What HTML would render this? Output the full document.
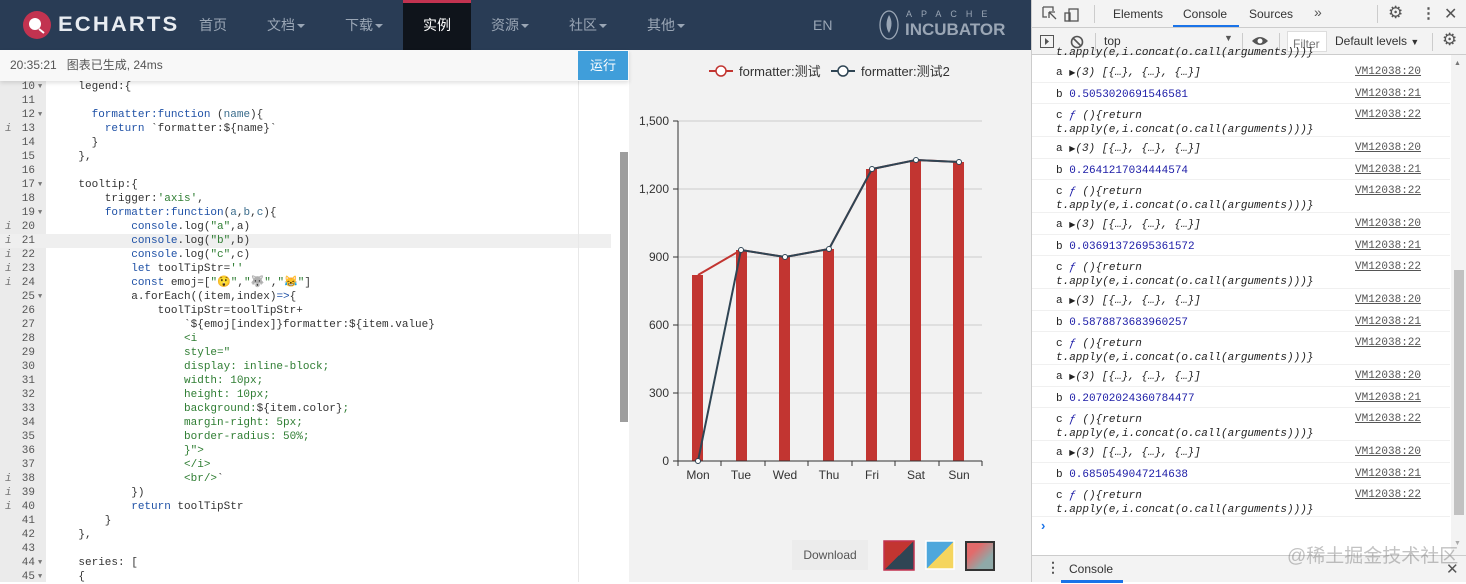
<!DOCTYPE html>
<html><head><meta charset="utf-8"><style>
*{margin:0;padding:0;box-sizing:border-box}
body{width:1466px;height:582px;overflow:hidden;background:#fff;font-family:"Liberation Sans","Noto Sans CJK SC",sans-serif;position:relative}
.hdr{position:absolute;left:0;top:0;width:1031px;height:50px;background:#293c55}
.nav{position:absolute;top:0;height:50px;line-height:50px;color:#9aa6b5;font-size:14px}
.car::after{content:"";display:inline-block;border-left:4px solid transparent;border-right:4px solid transparent;border-top:4px solid #9aa6b5;vertical-align:middle;margin-left:2px}
.status{position:absolute;left:0;top:50px;width:629px;height:31px;background:#f8f8f8;box-shadow:0 2px 4px rgba(0,0,0,.12);z-index:2;font-size:12px;color:#555;line-height:31px;padding-left:10px}
.run{position:absolute;left:578px;top:51px;width:50px;height:29px;background:#409eda;color:#fff;font-size:13px;line-height:29px;text-align:center;z-index:3}
.gut{position:absolute;left:0;top:81px;width:46px;height:501px;background:#ebebeb}
.code{position:absolute;left:0;top:80px;width:620px;font-family:"Liberation Mono","Noto Sans CJK SC",monospace;font-size:11px;line-height:14px;color:#333}
.ln{position:relative;height:14px;white-space:pre}
.n{position:absolute;left:0;width:35px;text-align:right;color:#555}
.i{position:absolute;left:5px;color:#777;font-style:italic}
.f{position:absolute;left:38px;color:#777;font-size:7px}
.t{position:absolute;left:52px}
.k{color:#1f51a6}.s{color:#2e7d32}.v{color:#3a6c8c}
.chart{position:absolute;left:629px;top:50px;width:402px;height:532px;background:#f2f2f2}
.dev{position:absolute;left:1031px;top:0;width:435px;height:582px;background:#fff;border-left:1px solid #ccc;font-size:12px;color:#333}
.tb{position:absolute;left:0;width:435px;background:#f3f3f3;border-bottom:1px solid #ccc}
.row{position:absolute;left:0;width:418px;border-bottom:1px solid #f0f0f0;font-family:"Liberation Mono",monospace;font-size:11px;color:#222}
.row .l{position:absolute;left:24px;top:5px;white-space:pre;line-height:14px}
.row .r{position:absolute;left:323px;top:5px;text-decoration:underline;color:#555}
.it{font-style:italic}.bl{color:#1a1aa6}
</style></head><body>
<div class="hdr">
  <svg style="position:absolute;left:22px;top:10px" width="30" height="30"><circle cx="15" cy="15" r="14" fill="#c23350"/><circle cx="13" cy="14" r="6" fill="#fff"/><path d="M17 19 l5 4" stroke="#fff" stroke-width="2"/></svg>
  <div class="nav" style="left:58px;color:#e8ecf1;font-size:21px;font-weight:bold;letter-spacing:2px;transform:scaleX(1.05);transform-origin:left">ECHARTS</div>
  <div class="nav" style="left:199px">首页</div>
  <div class="nav car" style="left:267px">文档</div>
  <div class="nav car" style="left:345px">下载</div>
  <div style="position:absolute;left:403px;top:0;width:68px;height:50px;background:#0f141b;border-top:3px solid #c23350"></div>
  <div class="nav" style="left:423px;color:#fff">实例</div>
  <div class="nav car" style="left:491px">资源</div>
  <div class="nav car" style="left:569px">社区</div>
  <div class="nav car" style="left:647px">其他</div>
  <div class="nav" style="left:813px">EN</div>
  <svg style="position:absolute;left:878px;top:9px" width="22" height="32"><ellipse cx="11" cy="16" rx="9" ry="14" fill="none" stroke="#9aa6b5" stroke-width="1.3"/><path d="M11 6 q5 8 0 18 q-5-8 0-18" fill="#9aa6b5"/></svg>
  <div style="position:absolute;left:906px;top:9px;color:#9aa6b5;font-size:9px;letter-spacing:9px">APACHE</div>
  <div style="position:absolute;left:905px;top:20px;color:#9aa6b5;font-size:17px;font-weight:bold">INCUBATOR</div>
</div>
<div class="status">20:35:21&nbsp;&nbsp;&nbsp;图表已生成, 24ms</div>
<div class="run">运行</div>
<div class="gut"></div>
<div style="position:absolute;left:0;top:234px;width:611px;height:14px;background:#efefef"></div>
<div style="position:absolute;left:578px;top:81px;width:1px;height:501px;background:#e8e8e8"></div>
<div style="position:absolute;left:620px;top:152px;width:8px;height:270px;background:#9e9e9e"></div>
<div class="code">
<div class="ln"><span class="n">10</span><span class="f">▼</span><span class="t">    legend:{</span></div>
<div class="ln"><span class="n">11</span><span class="t"></span></div>
<div class="ln"><span class="n">12</span><span class="f">▼</span><span class="t">      <span class="k">formatter:function</span> (<span class="v">name</span>){</span></div>
<div class="ln"><span class="i">i</span><span class="n">13</span><span class="t">        <span class="k">return</span> `formatter:${name}`</span></div>
<div class="ln"><span class="n">14</span><span class="t">      }</span></div>
<div class="ln"><span class="n">15</span><span class="t">    },</span></div>
<div class="ln"><span class="n">16</span><span class="t"></span></div>
<div class="ln"><span class="n">17</span><span class="f">▼</span><span class="t">    tooltip:{</span></div>
<div class="ln"><span class="n">18</span><span class="t">        trigger:<span class="s">'axis'</span>,</span></div>
<div class="ln"><span class="n">19</span><span class="f">▼</span><span class="t">        <span class="k">formatter:function</span>(<span class="v">a</span>,<span class="v">b</span>,<span class="v">c</span>){</span></div>
<div class="ln"><span class="i">i</span><span class="n">20</span><span class="t">            <span class="k">console</span>.log(<span class="s">"a"</span>,a)</span></div>
<div class="ln"><span class="i">i</span><span class="n">21</span><span class="t">            <span class="k">console</span>.log(<span class="s">"b"</span>,b)</span></div>
<div class="ln"><span class="i">i</span><span class="n">22</span><span class="t">            <span class="k">console</span>.log(<span class="s">"c"</span>,c)</span></div>
<div class="ln"><span class="i">i</span><span class="n">23</span><span class="t">            <span class="k">let</span> toolTipStr=<span class="s">''</span></span></div>
<div class="ln"><span class="i">i</span><span class="n">24</span><span class="t">            <span class="k">const</span> emoj=[<span class="s">"😲"</span>,<span class="s">"🐺"</span>,<span class="s">"😹"</span>]</span></div>
<div class="ln"><span class="n">25</span><span class="f">▼</span><span class="t">            a.forEach((item,index)<span class="k">=&gt;</span>{</span></div>
<div class="ln"><span class="n">26</span><span class="t">                toolTipStr=toolTipStr+</span></div>
<div class="ln"><span class="n">27</span><span class="t">                    `${emoj[index]}formatter:${item.value}</span></div>
<div class="ln"><span class="n">28</span><span class="t"><span class="s">                    &lt;i</span></span></div>
<div class="ln"><span class="n">29</span><span class="t"><span class="s">                    style="</span></span></div>
<div class="ln"><span class="n">30</span><span class="t"><span class="s">                    display: inline-block;</span></span></div>
<div class="ln"><span class="n">31</span><span class="t"><span class="s">                    width: 10px;</span></span></div>
<div class="ln"><span class="n">32</span><span class="t"><span class="s">                    height: 10px;</span></span></div>
<div class="ln"><span class="n">33</span><span class="t"><span class="s">                    background:</span>${item.color}<span class="s">;</span></span></div>
<div class="ln"><span class="n">34</span><span class="t"><span class="s">                    margin-right: 5px;</span></span></div>
<div class="ln"><span class="n">35</span><span class="t"><span class="s">                    border-radius: 50%;</span></span></div>
<div class="ln"><span class="n">36</span><span class="t"><span class="s">                    }"&gt;</span></span></div>
<div class="ln"><span class="n">37</span><span class="t"><span class="s">                    &lt;/i&gt;</span></span></div>
<div class="ln"><span class="i">i</span><span class="n">38</span><span class="t"><span class="s">                    &lt;br/&gt;</span>`</span></div>
<div class="ln"><span class="i">i</span><span class="n">39</span><span class="t">            })</span></div>
<div class="ln"><span class="i">i</span><span class="n">40</span><span class="t">            <span class="k">return</span> toolTipStr</span></div>
<div class="ln"><span class="n">41</span><span class="t">        }</span></div>
<div class="ln"><span class="n">42</span><span class="t">    },</span></div>
<div class="ln"><span class="n">43</span><span class="t"></span></div>
<div class="ln"><span class="n">44</span><span class="f">▼</span><span class="t">    series: [</span></div>
<div class="ln"><span class="n">45</span><span class="f">▼</span><span class="t">    {</span></div>
</div>
<div class="chart">
<svg width="402" height="532" style="position:absolute;left:0;top:0;font-family:'Liberation Sans','Noto Sans CJK SC',sans-serif">
<g transform="translate(-629,-50)">
<line x1="709" y1="71" x2="733" y2="71" stroke="#c23531" stroke-width="2"/><circle cx="721" cy="71" r="5" fill="#fff" stroke="#c23531" stroke-width="1.5"/>
<text x="739" y="76" font-size="13" fill="#333">formatter:测试</text>
<line x1="831" y1="71" x2="855" y2="71" stroke="#2f4554" stroke-width="2"/><circle cx="843" cy="71" r="5" fill="#fff" stroke="#2f4554" stroke-width="1.5"/>
<text x="861" y="76" font-size="13" fill="#333">formatter:测试2</text>
<g stroke="#ccc"><line x1="678" y1="121" x2="982" y2="121"/><line x1="678" y1="189" x2="982" y2="189"/><line x1="678" y1="257" x2="982" y2="257"/><line x1="678" y1="325" x2="982" y2="325"/><line x1="678" y1="393" x2="982" y2="393"/></g>
<g font-size="12" fill="#333" text-anchor="end"><text x="669" y="125">1,500</text><text x="669" y="193">1,200</text><text x="669" y="261">900</text><text x="669" y="329">600</text><text x="669" y="397">300</text><text x="669" y="465">0</text></g>
<line x1="678" y1="121" x2="678" y2="461" stroke="#333"/>
<g stroke="#333"><line x1="673" y1="121" x2="678" y2="121"/><line x1="673" y1="189" x2="678" y2="189"/><line x1="673" y1="257" x2="678" y2="257"/><line x1="673" y1="325" x2="678" y2="325"/><line x1="673" y1="393" x2="678" y2="393"/><line x1="673" y1="461" x2="678" y2="461"/></g>
<g fill="#c23531"><rect x="692" y="275" width="11" height="186"/><rect x="736" y="250" width="11" height="211"/><rect x="779" y="257" width="11" height="204"/><rect x="823" y="249" width="11" height="212"/><rect x="866" y="169" width="11" height="292"/><rect x="910" y="160" width="11" height="301"/><rect x="953" y="162" width="11" height="299"/></g>
<line x1="678" y1="461" x2="982" y2="461" stroke="#333"/>
<g stroke="#333"><line x1="678" y1="461" x2="678" y2="466"/><line x1="721" y1="461" x2="721" y2="466"/><line x1="765" y1="461" x2="765" y2="466"/><line x1="808" y1="461" x2="808" y2="466"/><line x1="852" y1="461" x2="852" y2="466"/><line x1="895" y1="461" x2="895" y2="466"/><line x1="939" y1="461" x2="939" y2="466"/><line x1="982" y1="461" x2="982" y2="466"/></g>
<g font-size="12" fill="#333" text-anchor="middle"><text x="698" y="479">Mon</text><text x="741" y="479">Tue</text><text x="785" y="479">Wed</text><text x="829" y="479">Thu</text><text x="872" y="479">Fri</text><text x="916" y="479">Sat</text><text x="959" y="479">Sun</text></g>
<polyline points="698,275 741,250 785,257 829,249 872,169 916,160 959,162" fill="none" stroke="#c23531" stroke-width="2"/>
<polyline points="698,461 741,250 785,257 829,249 872,169 916,160 959,162" fill="none" stroke="#2f4554" stroke-width="2"/>
<g fill="#fff" stroke="#2f4554"><circle cx="698" cy="461" r="2.5"/><circle cx="741" cy="250" r="2.5"/><circle cx="785" cy="257" r="2.5"/><circle cx="829" cy="249" r="2.5"/><circle cx="872" cy="169" r="2.5"/><circle cx="916" cy="160" r="2.5"/><circle cx="959" cy="162" r="2.5"/></g>
<rect x="792" y="540" width="76" height="30" fill="#ececec"/><text x="830" y="559" font-size="12" fill="#555" text-anchor="middle">Download</text>
<defs><linearGradient id="g1" x1="0" y1="0" x2="1" y2="1"><stop offset=".5" stop-color="#c23531"/><stop offset=".5" stop-color="#2f4554"/></linearGradient>
<linearGradient id="g2" x1="0" y1="0" x2="1" y2="1"><stop offset=".5" stop-color="#4ea7dc"/><stop offset=".5" stop-color="#f5d55e"/></linearGradient>
<linearGradient id="g3" x1="0" y1="0" x2="1" y2="1"><stop offset=".3" stop-color="#e26b6b"/><stop offset=".7" stop-color="#8fa9a8"/></linearGradient></defs>
<rect x="884" y="541" width="30" height="29" fill="url(#g1)" stroke="#c23350" stroke-width="1.5"/>
<rect x="926" y="541" width="28" height="28" fill="url(#g2)" stroke="#fff" stroke-width="1.5"/>
<rect x="966" y="542" width="28" height="28" fill="url(#g3)" stroke="#333" stroke-width="2"/>
</g></svg>
</div>
<div class="dev">
  <div class="tb" style="top:0;height:28px">
    <svg style="position:absolute;left:10px;top:6px" width="40" height="16"><path d="M1 1h10v4M1 1v10h4M7 6l7 7M7 6v6M7 6h6" fill="none" stroke="#555" stroke-width="1.3"/><rect x="27" y="3" width="9" height="12" fill="none" stroke="#555" stroke-width="1.3"/><rect x="23" y="7" width="5" height="8" fill="none" stroke="#555" stroke-width="1.3"/></svg>
    <div style="position:absolute;left:62px;top:5px;width:1px;height:18px;background:#ccc"></div>
    <div style="position:absolute;left:81px;top:7px;color:#333">Elements</div>
    <div style="position:absolute;left:151px;top:7px;color:#333">Console</div>
    <div style="position:absolute;left:141px;top:25px;width:66px;height:2px;background:#1a73e8"></div>
    <div style="position:absolute;left:217px;top:7px;color:#333">Sources</div>
    <div style="position:absolute;left:282px;top:4px;color:#555;font-size:14px">»</div>
    <div style="position:absolute;left:345px;top:5px;width:1px;height:18px;background:#ccc"></div>
    <div style="position:absolute;left:356px;top:3px;color:#555;font-size:17px">⚙</div>
    <div style="position:absolute;left:389px;top:4px;color:#555;font-size:15px;font-weight:bold">⋮</div>
    <div style="position:absolute;left:412px;top:4px;color:#555;font-size:16px">✕</div>
  </div>
  <div class="tb" style="top:28px;height:27px">
    <svg style="position:absolute;left:8px;top:6px" width="50" height="16"><rect x="0.5" y="1.5" width="13" height="12" fill="none" stroke="#555"/><path d="M5 4l4 3.5-4 3.5z" fill="#555"/><circle cx="37" cy="8" r="5.5" fill="none" stroke="#555" stroke-width="1.6"/><path d="M33 4l8 8" stroke="#555" stroke-width="1.6"/></svg>
    <div style="position:absolute;left:63px;top:5px;width:1px;height:18px;background:#ccc"></div>
    <div style="position:absolute;left:72px;top:6px">top</div>
    <div style="position:absolute;left:192px;top:5px;font-size:9px;color:#555">▼</div>
    <div style="position:absolute;left:210px;top:5px;width:1px;height:18px;background:#ccc"></div>
    <svg style="position:absolute;left:219px;top:7px" width="18" height="12"><path d="M1 6q8-8 16 0q-8 8-16 0z" fill="#555"/><circle cx="9" cy="6" r="2.5" fill="#fff"/></svg>
    <div style="position:absolute;left:247px;top:5px;width:1px;height:18px;background:#ccc"></div>
    <div style="position:absolute;left:255px;top:3px;width:40px;height:21px;background:#fff;border:1px solid #ddd;color:#777;padding:5px 0 0 5px">Filter</div>
    <div style="position:absolute;left:303px;top:6px">Default levels <span style="font-size:9px">▼</span></div>
    <div style="position:absolute;left:400px;top:5px;width:1px;height:18px;background:#ccc"></div>
    <div style="position:absolute;left:410px;top:2px;color:#555;font-size:17px">⚙</div>
  </div>
  <div style="position:absolute;left:24px;top:47px;font-family:'Liberation Mono',monospace;font-size:11px;font-style:italic;color:#222">t.apply(e,i.concat(o.call(arguments)))}</div>
  <div class="row" style="top:61px;height:22px"><div class="l">a <span style="font-size:8px">▶</span><span class="it">(3) [{…}, {…}, {…}]</span></div><div class="r">VM12038:20</div></div>
  <div class="row" style="top:83px;height:21px"><div class="l">b <span class="bl">0.5053020691546581</span></div><div class="r">VM12038:21</div></div>
  <div class="row" style="top:104px;height:33px"><div class="l">c <span class="bl it">ƒ</span> <span class="it">(){return
t.apply(e,i.concat(o.call(arguments)))}</span></div><div class="r">VM12038:22</div></div>
  <div class="row" style="top:137px;height:22px"><div class="l">a <span style="font-size:8px">▶</span><span class="it">(3) [{…}, {…}, {…}]</span></div><div class="r">VM12038:20</div></div>
  <div class="row" style="top:159px;height:21px"><div class="l">b <span class="bl">0.2641217034444574</span></div><div class="r">VM12038:21</div></div>
  <div class="row" style="top:180px;height:33px"><div class="l">c <span class="bl it">ƒ</span> <span class="it">(){return
t.apply(e,i.concat(o.call(arguments)))}</span></div><div class="r">VM12038:22</div></div>
  <div class="row" style="top:213px;height:22px"><div class="l">a <span style="font-size:8px">▶</span><span class="it">(3) [{…}, {…}, {…}]</span></div><div class="r">VM12038:20</div></div>
  <div class="row" style="top:235px;height:21px"><div class="l">b <span class="bl">0.03691372695361572</span></div><div class="r">VM12038:21</div></div>
  <div class="row" style="top:256px;height:33px"><div class="l">c <span class="bl it">ƒ</span> <span class="it">(){return
t.apply(e,i.concat(o.call(arguments)))}</span></div><div class="r">VM12038:22</div></div>
  <div class="row" style="top:289px;height:22px"><div class="l">a <span style="font-size:8px">▶</span><span class="it">(3) [{…}, {…}, {…}]</span></div><div class="r">VM12038:20</div></div>
  <div class="row" style="top:311px;height:21px"><div class="l">b <span class="bl">0.5878873683960257</span></div><div class="r">VM12038:21</div></div>
  <div class="row" style="top:332px;height:33px"><div class="l">c <span class="bl it">ƒ</span> <span class="it">(){return
t.apply(e,i.concat(o.call(arguments)))}</span></div><div class="r">VM12038:22</div></div>
  <div class="row" style="top:365px;height:22px"><div class="l">a <span style="font-size:8px">▶</span><span class="it">(3) [{…}, {…}, {…}]</span></div><div class="r">VM12038:20</div></div>
  <div class="row" style="top:387px;height:21px"><div class="l">b <span class="bl">0.20702024360784477</span></div><div class="r">VM12038:21</div></div>
  <div class="row" style="top:408px;height:33px"><div class="l">c <span class="bl it">ƒ</span> <span class="it">(){return
t.apply(e,i.concat(o.call(arguments)))}</span></div><div class="r">VM12038:22</div></div>
  <div class="row" style="top:441px;height:22px"><div class="l">a <span style="font-size:8px">▶</span><span class="it">(3) [{…}, {…}, {…}]</span></div><div class="r">VM12038:20</div></div>
  <div class="row" style="top:463px;height:21px"><div class="l">b <span class="bl">0.6850549047214638</span></div><div class="r">VM12038:21</div></div>
  <div class="row" style="top:484px;height:33px"><div class="l">c <span class="bl it">ƒ</span> <span class="it">(){return
t.apply(e,i.concat(o.call(arguments)))}</span></div><div class="r">VM12038:22</div></div>
  <div style="position:absolute;left:9px;top:518px;color:#1a73e8;font-size:13px;font-weight:bold">›</div>
  <div style="position:absolute;left:419px;top:55px;width:16px;height:500px;background:#f3f3f3"></div>
  <div style="position:absolute;left:422px;top:270px;width:10px;height:245px;background:#c1c1c1"></div>
  <div style="position:absolute;left:422px;top:60px;font-size:7px;color:#777">▲</div>
  <div style="position:absolute;left:422px;top:540px;font-size:7px;color:#aaa">▼</div>
  <div style="position:absolute;left:255px;top:541px;font-size:19px;color:rgba(120,120,120,.45);z-index:5">@稀土掘金技术社区</div>
  <div class="tb" style="top:555px;height:27px;border-top:1px solid #ccc;border-bottom:none">
    <div style="position:absolute;left:14px;top:3px;color:#555;font-size:14px;font-weight:bold">⋮</div>
    <div style="position:absolute;left:37px;top:6px;color:#333">Console</div>
    <div style="position:absolute;left:29px;top:24px;width:62px;height:3px;background:#1a73e8"></div>
    <div style="position:absolute;left:414px;top:4px;color:#555;font-size:15px">✕</div>
  </div>
</div>
</body></html>
